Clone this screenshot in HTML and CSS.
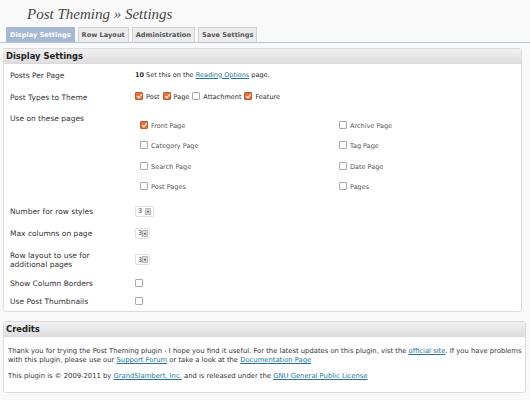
FILE: index.html
```html
<!DOCTYPE html>
<html>
<head>
<meta charset="utf-8">
<link rel="stylesheet" href="styles.css">
</head>
<body>
<div class="wrap">
  <h1 class="title">Post Theming » Settings</h1>
  <ul class="tabs">
    <li class="tab active">Display Settings</li>
    <li class="tab">Row Layout</li>
    <li class="tab">Administration</li>
    <li class="tab">Save Settings</li>
  </ul>

  <div class="panel panel-main">
    <h3 class="panel-head">Display Settings</h3>
    <table class="form">
      <tr class="r22">
        <th>Posts Per Page</th>
        <td class="val-text"><b>10</b> Set this on the <a href="#">Reading Options</a> page.</td>
      </tr>
      <tr class="r22">
        <th>Post Types to Theme</th>
        <td class="val-text">
          <span class="opt"><span class="cb on"></span>Post</span><span class="opt"><span class="cb on"></span>Page</span><span class="opt"><span class="cb"></span>Attachment</span><span class="opt"><span class="cb on"></span>Feature</span>
        </td>
      </tr>
      <tr class="rpages">
        <th>Use on these pages</th>
        <td class="val-text">
          <div class="grid">
            <span class="gopt"><span class="cb on"></span>Front Page</span>
            <span class="gopt"><span class="cb"></span>Archive Page</span>
            <span class="gopt"><span class="cb"></span>Category Page</span>
            <span class="gopt"><span class="cb"></span>Tag Page</span>
            <span class="gopt"><span class="cb"></span>Search Page</span>
            <span class="gopt"><span class="cb"></span>Date Page</span>
            <span class="gopt"><span class="cb"></span>Post Pages</span>
            <span class="gopt"><span class="cb"></span>Pages</span>
          </div>
        </td>
      </tr>
      <tr class="r22">
        <th>Number for row styles</th>
        <td><span class="sel"><span class="val">3</span><span class="btn"></span></span></td>
      </tr>
      <tr class="r22">
        <th>Max columns on page</th>
        <td><span class="sel narrow"><span class="val">3</span><span class="btn"></span></span></td>
      </tr>
      <tr class="r31">
        <th>Row layout to use for additional pages</th>
        <td><span class="sel narrow"><span class="val">3</span><span class="btn"></span></span></td>
      </tr>
      <tr class="r17">
        <th>Show Column Borders</th>
        <td><span class="cb"></span></td>
      </tr>
      <tr class="r18">
        <th>Use Post Thumbnails</th>
        <td><span class="cb"></span></td>
      </tr>
    </table>
  </div>

  <div class="panel panel-credits">
    <h3 class="panel-head">Credits</h3>
    <div class="credits-body">
      <p>Thank you for trying the Post Theming plugin - I hope you find it useful. For the latest updates on this plugin, vist the <a href="#">official site</a>. If you have problems<br>with this plugin, please use our <a href="#">Support Forum</a> or take a look at the <a href="#">Documentation Page</a></p>
      <p>This plugin is © 2009-2011 by <a href="#">GrandSlambert, Inc.</a> and is released under the <a href="#">GNU General Public License</a></p>
    </div>
  </div>
</div>
</body>
</html>
```

FILE: styles.css
```css
html, body {
  margin: 0;
  padding: 0;
  background: #f9f9f9;
}

body {
  font-family: "DejaVu Sans", Verdana, sans-serif;
  font-size: 7.5px;
  color: #333;
  width: 530px;
  height: 400px;
  overflow: hidden;
}

.title {
  margin: 0;
  padding-left: 27px;
  height: 27px;
  line-height: 28px;
  font-family: "Liberation Serif", "Times New Roman", serif;
  font-style: italic;
  font-weight: normal;
  font-size: 15px;
  color: #464646;
}

.tabs {
  list-style: none;
  margin: 0;
  padding: 0 0 0 6px;
  display: flex;
  gap: 3px;
  border-bottom: 1px solid #b5c5da;
  height: 15px;
}

.tab {
  box-sizing: border-box;
  height: 15px;
  padding: 0 3px;
  line-height: 14px;
  font-size: 6.6px;
  font-weight: bold;
  color: #555;
  background: #ececec;
  border: 1px solid #d2d2d2;
  border-bottom: none;
}

.tab.active {
  background: #a5b9d2;
  border-color: #a5b9d2;
  color: #fff;
}

.panel {
  background: #fff;
  border: 1px solid #dcdcdc;
  border-radius: 3px;
  margin-left: 3px;
  overflow: hidden;
}

.panel-main {
  margin-top: 5px;
  margin-right: 8px;
  padding-bottom: 1px;
}

.panel-credits {
  margin-top: 9px;
  margin-right: 4px;
}

.panel-head {
  margin: 0;
  height: 14px;
  line-height: 14px;
  padding-left: 2px;
  font-size: 8.4px;
  font-weight: bold;
  color: #222;
  background: linear-gradient(#f1f1f1, #dedede);
  border-bottom: 1px solid #dadada;
}

.form {
  border-collapse: collapse;
  margin-top: 0;
  width: 100%;
}

.form th {
  text-align: left;
  font-weight: normal;
  width: 102px;
  padding: 0 23px 0 6px;
  line-height: 9px;
  vertical-align: middle;
}

.form td {
  padding: 0;
  line-height: 9px;
  vertical-align: middle;
}

.form td.val-text {
  font-size: 6.5px;
  color: #2a2a2a;
}

.r22 { height: 22px; }
.r31 { height: 31px; }
.r17 { height: 17px; }
.r18 { height: 18px; }

.rpages th {
  vertical-align: top;
  padding-top: 6px;
}

.form .rpages td {
  vertical-align: top;
  padding: 8px 0 3px 5px;
}

a {
  color: #21759b;
  text-decoration: underline;
}

.cb {
  display: inline-block;
  box-sizing: border-box;
  width: 8px;
  height: 8px;
  border: 1px solid #a9a9a9;
  border-radius: 1px;
  background: #fff;
  vertical-align: -1px;
  position: relative;
}

.cb.on {
  background: #e2733f;
  border-color: #c45a2a;
}

.cb.on::after {
  content: "";
  position: absolute;
  left: 2px;
  top: 0px;
  width: 2px;
  height: 4px;
  border: solid #fff;
  border-width: 0 1px 1px 0;
  transform: rotate(40deg);
}

.opt {
  margin-right: 3px;
}

.opt .cb {
  margin-right: 3px;
}

.grid {
  display: grid;
  grid-template-columns: 199px 1fr;
  grid-auto-rows: 20.3px;
  align-items: center;
}

.gopt {
  color: #555;
}

.gopt .cb {
  margin-right: 3px;
}

.sel {
  display: inline-flex;
  align-items: center;
  box-sizing: border-box;
  width: 19px;
  height: 11px;
  border: 1px solid #e0e0e0;
  border-radius: 2px;
  background: #fff;
  padding: 0 2px;
  vertical-align: middle;
  justify-content: space-between;
}

.sel.narrow {
  width: 15px;
  padding: 0 1px 0 2px;
}

.sel .val {
  font-size: 6.5px;
  line-height: 8px;
}

.sel .btn {
  display: inline-block;
  width: 6px;
  height: 7px;
  background: #d8d8d8;
  border: 1px solid #b8b8b8;
  box-sizing: border-box;
  position: relative;
}

.sel .btn::after {
  content: "";
  position: absolute;
  left: 1px;
  top: 2px;
  border-left: 1.5px solid transparent;
  border-right: 1.5px solid transparent;
  border-top: 2px solid #333;
}

.credits-body {
  padding: 10px 4px 4px 4px;
  font-size: 6.8px;
}

.credits-body p {
  margin: 0 0 7px 0;
  line-height: 9px;
  white-space: nowrap;
}
```
